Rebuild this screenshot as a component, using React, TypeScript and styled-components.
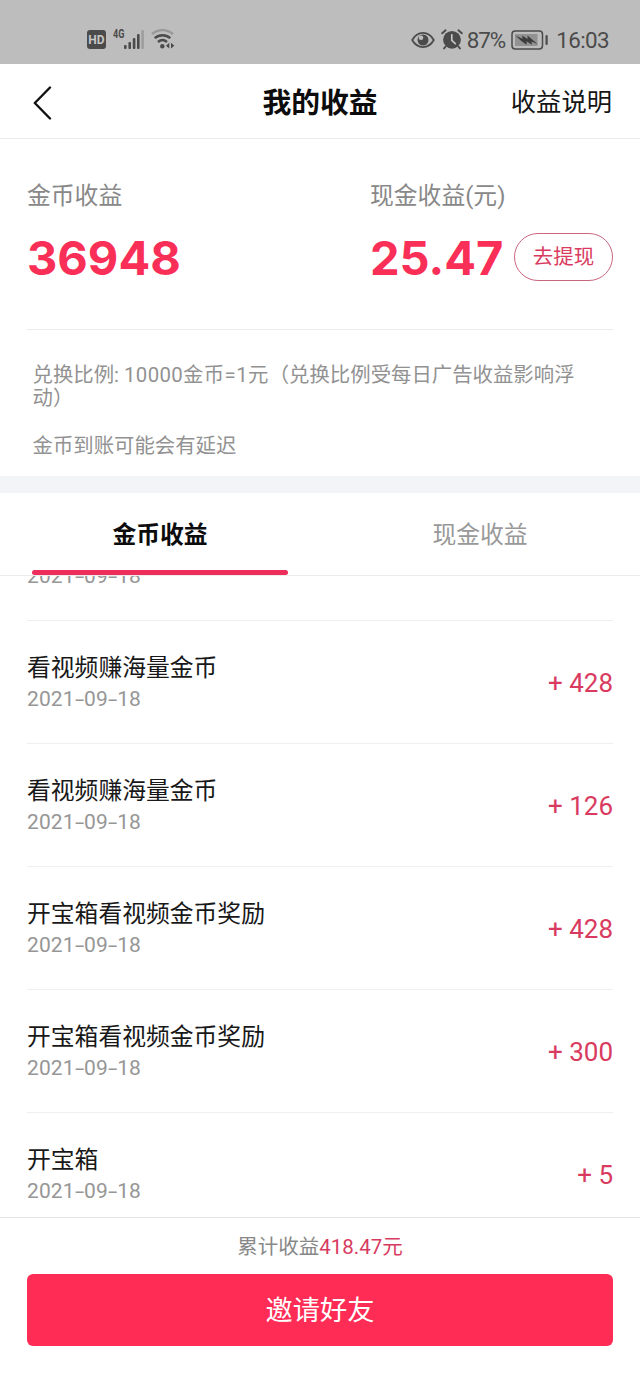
import React from 'react';
import styled, { createGlobalStyle } from 'styled-components';

const GlobalStyle = createGlobalStyle`
  * { box-sizing: border-box; }
  body {
    margin: 0;
    background: #fff;
    font-family: Roboto, "Noto Sans CJK SC", sans-serif;
    color: #111;
  }
  button { font: inherit; margin: 0; padding: 0; background: none; border: 0; }
`;

const Screen = styled.div`
  width: 640px;
  height: 1387px;
  display: flex;
  flex-direction: column;
  overflow: hidden;
  background: #fff;
`;

const StatusBar = styled.div`
  height: 64px;
  flex: none;
  display: flex;
  justify-content: space-between;
  align-items: flex-start;
  padding: 26px 31px 0 87px;
  background: #bdbdbd;
  color: #4b4b4b;
`;

const StatusGroup = styled.div`
  display: flex;
  align-items: center;
  height: 27px;
`;

const HdBadge = styled.span`
  width: 19px;
  height: 19px;
  border-radius: 3px;
  background: #4b4b4b;
  color: #c6c6c6;
  font-size: 12px;
  font-weight: 700;
  line-height: 20px;
  text-align: center;
`;

const Network = styled.span`
  align-self: flex-start;
  margin: 1px 0 0 7px;
  font-size: 13px;
  font-weight: 700;
  line-height: 14px;
  transform: scaleX(0.7);
  transform-origin: left;
  width: 11px;
`;

const StatusText = styled.span<{ $gap: number; $spacing: number }>`
  margin-left: ${(p) => p.$gap}px;
  font-size: 22.4px;
  line-height: 28px;
  letter-spacing: ${(p) => p.$spacing}px;
`;

const Glyph = styled.svg<{ $gap?: number }>`
  display: block;
  flex: none;
  margin-left: ${(p) => p.$gap ?? 0}px;
`;

const NavBar = styled.header`
  height: 75px;
  flex: none;
  display: grid;
  grid-template-columns: 1fr auto 1fr;
  align-items: center;
  padding: 3px 28px 0;
  border-bottom: 1px solid #ebebeb;
`;

const NavTitle = styled.h1`
  margin: 0;
  font-size: 28.8px;
  line-height: 40px;
  font-weight: 700;
  color: #0c0c0c;
`;

const NavAction = styled.button`
  justify-self: end;
  font-size: 25.3px;
  line-height: 40px;
  color: #161616;
`;

const Summary = styled.section`
  height: 191px;
  margin: 0 27px;
  flex: none;
  display: flex;
  justify-content: space-between;
  padding-top: 39px;
  border-bottom: 1px solid #ececec;
`;

const Balance = styled.div<{ $width: number }>`
  width: ${(p) => p.$width}px;
`;

const BalanceLabel = styled.div`
  font-size: 23.8px;
  line-height: 36px;
  color: #888;
  white-space: nowrap;
`;

const BalanceRow = styled.div`
  display: flex;
  justify-content: space-between;
  align-items: center;
  margin-top: 19px;
  height: 48px;
`;

const Figure = styled.span`
  padding-top: 1px;
  font-family: Inter, sans-serif;
  font-size: 47px;
  font-weight: 700;
  line-height: 48px;
  color: #fa2f58;
`;

const WithdrawButton = styled.button`
  width: 99px;
  height: 48px;
  flex: none;
  border: 1px solid #c9667f;
  border-radius: 24px;
  font-size: 20.5px;
  line-height: 46px;
  color: #d93b60;
`;

const Notes = styled.section`
  height: 146px;
  flex: none;
  padding: 34px 40px 0 32.5px;
  font-size: 20.4px;
  line-height: 23px;
  color: #929292;
`;

const Note = styled.p`
  margin: 0 0 25px;
`;

const Ratio = styled.span`
  letter-spacing: 0.35px;
`;

const Band = styled.div`
  height: 17px;
  flex: none;
  background: #f2f4f7;
`;

const Tabs = styled.nav`
  height: 83px;
  flex: none;
  display: flex;
  border-bottom: 1px solid #ededed;
`;

const Tab = styled.button<{ $active?: boolean }>`
  flex: 1;
  display: flex;
  flex-direction: column;
  align-items: center;
  justify-content: space-between;
  padding-top: 24px;
  font-size: 23.8px;
  line-height: 36px;
  font-weight: ${(p) => (p.$active ? 700 : 400)};
  color: ${(p) => (p.$active ? '#0c0c0c' : '#999')};
`;

const Indicator = styled.span`
  width: 256px;
  height: 5px;
  border-radius: 3px;
  background: #ee2e5a;
`;

const Records = styled.div`
  flex: 1;
  min-height: 0;
  overflow: hidden;
  padding: 0 27px;
`;

const RecordList = styled.ul`
  list-style: none;
  margin: -78px 0 0;
  padding: 0;
`;

const Record = styled.li`
  height: 123px;
  display: flex;
  align-items: center;
  justify-content: space-between;
  padding-top: 2px;
  border-bottom: 1px solid #efefef;
`;

const RecordInfo = styled.div`
  padding-bottom: 2px;
`;

const RecordTitle = styled.div`
  font-size: 23.8px;
  line-height: 34px;
  color: #181818;
`;

const RecordDate = styled.div`
  font-size: 21px;
  line-height: 29px;
  letter-spacing: 0.1px;
  color: #969696;
`;

const Hyphen = styled.span`
  display: inline-block;
  width: 9.4px;
  transform: scaleX(1.6);
  transform-origin: left;
`;

const Amount = styled.div`
  font-size: 26px;
  line-height: 34px;
  color: #d93b60;
`;

const Footer = styled.footer`
  height: 170px;
  flex: none;
  padding: 13px 27px 0;
  border-top: 1px solid #e4e4e4;
`;

const Total = styled.div`
  font-size: 20.5px;
  line-height: 32px;
  text-align: center;
  color: #888;
`;

const TotalValue = styled.span`
  color: #d93b60;
`;

const InviteButton = styled.button`
  display: block;
  width: 100%;
  height: 72px;
  margin-top: 11px;
  padding-top: 2px;
  border-radius: 6px;
  background: #ff2c55;
  color: #fff;
  font-size: 27.2px;
  line-height: 70px;
`;

const SignalIcon = () => (
  <Glyph width="20" height="20" viewBox="0 0 20 20">
    <g fill="#4b4b4b">
      <rect x="0" y="15" width="2.6" height="4" rx="1" />
      <rect x="4.4" y="12" width="2.6" height="7" rx="1" />
      <rect x="8.8" y="8" width="2.6" height="11" rx="1" />
      <rect x="13" y="4" width="2.6" height="15" rx="1" />
    </g>
    <rect x="17.4" y="0" width="2.4" height="19" rx="1" fill="#9b9b9b" />
  </Glyph>
);

const WifiIcon = () => (
  <Glyph width="24" height="21" viewBox="0 0 24 21" fill="none" strokeWidth="2.4" $gap={7}>
    <path d="M1 5.200C7.200-.2 15.800-.2 22 5.200" stroke="#989898" />
    <path d="M3.700 9.200c4.600-4 11-4 15.600 0" stroke="#4b4b4b" />
    <path d="M7 13c2.700-2.300 6.300-2.300 9 0" stroke="#4b4b4b" />
    <circle cx="11.300" cy="17.300" r="2.200" fill="#4b4b4b" />
    <path d="M18.300 13.800v5.800l-3.300-2.900zM20 13.800v5.800l3.300-2.900z" fill="#4b4b4b" />
  </Glyph>
);

const EyeIcon = () => (
  <Glyph width="24" height="18" viewBox="0 0 24 18">
    <path d="M1.200 9C6.500-.4 17.500-.4 22.800 9 17.500 18.400 6.500 18.400 1.200 9z" fill="none" stroke="#4b4b4b" strokeWidth="1.800" />
    <circle cx="12" cy="9" r="5.500" fill="#4b4b4b" />
    <circle cx="10" cy="6.700" r="2.300" fill="#bdbdbd" />
  </Glyph>
);

const AlarmIcon = () => (
  <Glyph width="22" height="21" viewBox="0 0 22 21" $gap={6}>
    <circle cx="11" cy="10.800" r="8.900" fill="#4b4b4b" />
    <path d="M1.200 4.300l3.400-3M20.800 4.300l-3.400-3M4.600 17.500l-1.500 1.900M17.400 17.500l1.500 1.900" stroke="#4b4b4b" strokeWidth="1.900" strokeLinecap="round" />
    <path d="M10.800 5.800v5.600l3.500 3.300" fill="none" stroke="#c4c4c4" strokeWidth="1.700" strokeLinecap="round" />
  </Glyph>
);

const BatteryIcon = () => (
  <Glyph width="38" height="20" viewBox="0 0 38 20" $gap={6}>
    <rect x="1" y="1" width="30.500" height="18" rx="3.200" fill="none" stroke="#4b4b4b" strokeWidth="1.500" />
    <rect x="4" y="4" width="22.500" height="12" fill="#929292" />
    <path d="M4.500 5.500L11.500 8.700 11.200 5.500 16.600 9 16.500 5.500 26.800 14.300 20.600 11.500 20.900 14.800 15.600 11.200 15.700 14.800 10.300 11z" fill="#3c3c3c" />
    <rect x="34.500" y="5" width="2.200" height="10" rx="1" fill="#4b4b4b" />
  </Glyph>
);

const BackIcon = () => (
  <Glyph width="22" height="34" viewBox="0 0 22 34" $gap={4}>
    <path d="M18 1.500L2.800 17 18 32.500" fill="none" stroke="#111" strokeWidth="2.400" strokeLinecap="round" strokeLinejoin="round" />
  </Glyph>
);

const DateText = ({ value }: { value: string }) => (
  <RecordDate>
    {value.split('-').map((part, i) => (
      <React.Fragment key={i}>
        {i > 0 && <Hyphen>-</Hyphen>}
        {part}
      </React.Fragment>
    ))}
  </RecordDate>
);

const records = [
  { title: '看视频赚海量金币', date: '2021-09-18', amount: 428 },
  { title: '看视频赚海量金币', date: '2021-09-18', amount: 428 },
  { title: '看视频赚海量金币', date: '2021-09-18', amount: 126 },
  { title: '开宝箱看视频金币奖励', date: '2021-09-18', amount: 428 },
  { title: '开宝箱看视频金币奖励', date: '2021-09-18', amount: 300 },
  { title: '开宝箱', date: '2021-09-18', amount: 5 },
];

export default function App() {
  return (
    <Screen>
      <GlobalStyle />
      <StatusBar>
        <StatusGroup>
          <HdBadge>HD</HdBadge>
          <Network>4G</Network>
          <SignalIcon />
          <WifiIcon />
        </StatusGroup>
        <StatusGroup>
          <EyeIcon />
          <AlarmIcon />
          <StatusText $gap={4} $spacing={-1}>87%</StatusText>
          <BatteryIcon />
          <StatusText $gap={7} $spacing={-0.6}>16:03</StatusText>
        </StatusGroup>
      </StatusBar>
      <NavBar>
        <BackIcon />
        <NavTitle>我的收益</NavTitle>
        <NavAction>收益说明</NavAction>
      </NavBar>
      <Summary>
        <Balance $width={200}>
          <BalanceLabel>金币收益</BalanceLabel>
          <BalanceRow>
            <Figure>36948</Figure>
          </BalanceRow>
        </Balance>
        <Balance $width={243}>
          <BalanceLabel>现金收益(元)</BalanceLabel>
          <BalanceRow>
            <Figure>25.47</Figure>
            <WithdrawButton>去提现</WithdrawButton>
          </BalanceRow>
        </Balance>
      </Summary>
      <Notes>
        <Note>
          兑换比例: <Ratio>10000金币=1元</Ratio>（兑换比例受每日广告收益影响浮动）
        </Note>
        <Note>金币到账可能会有延迟</Note>
      </Notes>
      <Band />
      <Tabs>
        <Tab $active>
          金币收益
          <Indicator />
        </Tab>
        <Tab>现金收益</Tab>
      </Tabs>
      <Records>
        <RecordList>
          {records.map((r, i) => (
            <Record key={i}>
              <RecordInfo>
                <RecordTitle>{r.title}</RecordTitle>
                <DateText value={r.date} />
              </RecordInfo>
              <Amount>+ {r.amount}</Amount>
            </Record>
          ))}
        </RecordList>
      </Records>
      <Footer>
        <Total>
          累计收益<TotalValue>418.47元</TotalValue>
        </Total>
        <InviteButton>邀请好友</InviteButton>
      </Footer>
    </Screen>
  );
}
